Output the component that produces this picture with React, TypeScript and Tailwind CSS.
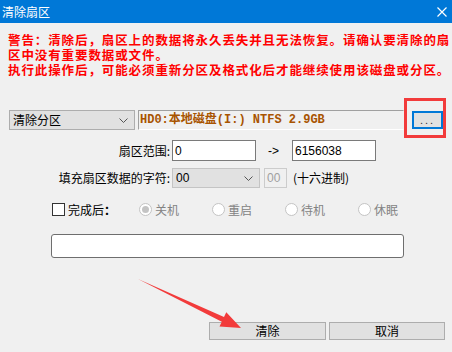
import React from "react";

const cjk = "font-['Microsoft_YaHei','Noto_Sans_CJK_SC',sans-serif]";

function Chevron() {
  return (
    <svg width="9" height="5" viewBox="0 0 9 5" className="shrink-0">
      <polyline points="0.5,0.5 4.5,4.5 8.5,0.5" fill="none" stroke="#555" strokeWidth="1" />
    </svg>
  );
}

function Radio({ label, checked }: { label: string; checked?: boolean }) {
  return (
    <div className="w-[73px] flex items-center shrink-0">
      <span className="w-[13px] h-[13px] rounded-full border border-[#c4c4c4] bg-white flex items-center justify-center">
        {checked && <span className="w-[7px] h-[7px] rounded-full bg-[#c4c4c4]" />}
      </span>
      <span className="ml-[3px] text-[12px] leading-[13px] text-[#838383]">{label}</span>
    </div>
  );
}

export default function App() {
  return (
    <div className={`relative w-[452px] h-[352px] bg-[#f0f0f0] overflow-hidden text-black ${cjk}`}>
      {/* Title bar */}
      <div className="h-[23px] bg-[#0078d7] flex items-center justify-between pl-[2px] pr-[5px]">
        <span className="text-white text-[12px] leading-[14px]">清除扇区</span>
        <svg width="10" height="10" viewBox="0 0 10 10">
          <path d="M0.5 0.5 L9.5 9.5 M9.5 0.5 L0.5 9.5" stroke="white" strokeWidth="1.2" />
        </svg>
      </div>

      {/* Warning */}
      <div className="mt-[9px] pl-[8px] text-[#ff0000] font-bold text-[12.5px] leading-[15px] tracking-[0.9px] whitespace-nowrap">
        <div className="h-[15px]">警告：清除后，扇区上的数据将永久丢失并且无法恢复。请确认要清除的扇</div>
        <div className="h-[15px]">区中没有重要数据或文件。</div>
        <div className="h-[15px]">执行此操作后，可能必须重新分区及格式化后才能继续使用该磁盘或分区。</div>
      </div>

      {/* Partition row */}
      <div className="mt-[33px] pl-[9px] flex items-start h-[20px]">
        <div className="w-[126px] h-[20px] bg-[#e1e1e1] border border-[#adadad] flex items-center justify-between pl-[3px] pr-[6px]">
          <span className="text-[12px] leading-[14px]">清除分区</span>
          <Chevron />
        </div>
        <div className="ml-[3px] w-[266px] h-[20px] border-t border-l border-[#a0a0a0] border-b-white border-r-transparent border-b border-r flex items-center pl-[1px] whitespace-nowrap">
          <span className="text-[12px] leading-[14px] font-bold text-[#a85400] font-['Liberation_Mono','Noto_Sans_CJK_SC',monospace]">
            HD0:本地磁盘(I:) NTFS 2.9GB
          </span>
        </div>
        <div className="ml-[8px] mt-[1px] w-[31px] h-[18px] bg-[#e1e1e1] border-2 border-[#0078d7] flex items-center justify-center text-[11px] leading-[11px] text-[#333] tracking-[2px] font-['Liberation_Sans',sans-serif]">
          ...
        </div>
      </div>

      {/* Sector range */}
      <div className="mt-[10px] flex items-center h-[21px]">
        <div className="w-[170px] text-right text-[12px] leading-[14px]">扇区范围:</div>
        <div className="ml-[2px] w-[84px] h-[21px] bg-white border border-[#7a7a7a] flex items-center pl-[2px] text-[12px] font-['Liberation_Sans',sans-serif]">0</div>
        <div className="w-[36px] pl-[12px] text-[12px] font-['Liberation_Sans',sans-serif]">-&gt;</div>
        <div className="w-[84px] h-[21px] bg-white border border-[#7a7a7a] flex items-center pl-[2px] text-[12px] font-['Liberation_Sans',sans-serif]">6156038</div>
      </div>

      {/* Fill char */}
      <div className="mt-[7px] flex items-center h-[20px]">
        <div className="w-[170px] text-right text-[12px] leading-[14px]">填充扇区数据的字符:</div>
        <div className="ml-[2px] w-[88px] h-[20px] bg-[#e1e1e1] border border-[#c4c4c4] flex items-center justify-between pl-[3px] pr-[6px]">
          <span className="text-[12px] font-['Liberation_Sans',sans-serif]">00</span>
          <Chevron />
        </div>
        <div className="ml-[4px] w-[23px] h-[20px] border border-[#cccccc] flex items-center pl-[2px] text-[12px] text-[#a0a0a0] font-['Liberation_Sans',sans-serif]">00</div>
        <div className="ml-[6px] text-[12px] leading-[14px]">(十六进制)</div>
      </div>

      {/* After completion */}
      <div className="mt-[15px] pl-[52px] flex items-center h-[13px]">
        <div className="w-[87px] flex items-center shrink-0">
          <span className="w-[13px] h-[13px] border border-[#333] bg-white shrink-0" />
          <span className="ml-[3px] text-[12px] leading-[13px]">完成后<b>：</b></span>
        </div>
        <Radio label="关机" checked />
        <Radio label="重启" />
        <Radio label="待机" />
        <Radio label="休眠" />
      </div>

      {/* Progress box */}
      <div className="mt-[18px] ml-[51px] w-[353px] h-[24px] bg-white border border-[#6e6e6e] rounded-[3px]" />

      {/* Buttons */}
      <div className="mt-[64px] pl-[209px] flex">
        <button className="w-[117px] h-[18px] bg-[#e1e1e1] border border-[#adadad] text-[12px] leading-[14px]">清除</button>
        <button className="ml-[3px] w-[116px] h-[18px] bg-[#e1e1e1] border border-[#adadad] text-[12px] leading-[14px]">取消</button>
      </div>

      {/* Annotations */}
      <div className="absolute left-[404px] top-[98px] w-[42px] h-[40px] border-[3px] border-[#f23b3b]" />
      <svg className="absolute left-0 top-0 pointer-events-none" width="452" height="352">
        <polygon
          points="138,279 221.8,321.7 219.5,326.6 241,328 226.3,312.2 224,317.1"
          fill="#f23b3b"
        />
      </svg>
    </div>
  );
}
